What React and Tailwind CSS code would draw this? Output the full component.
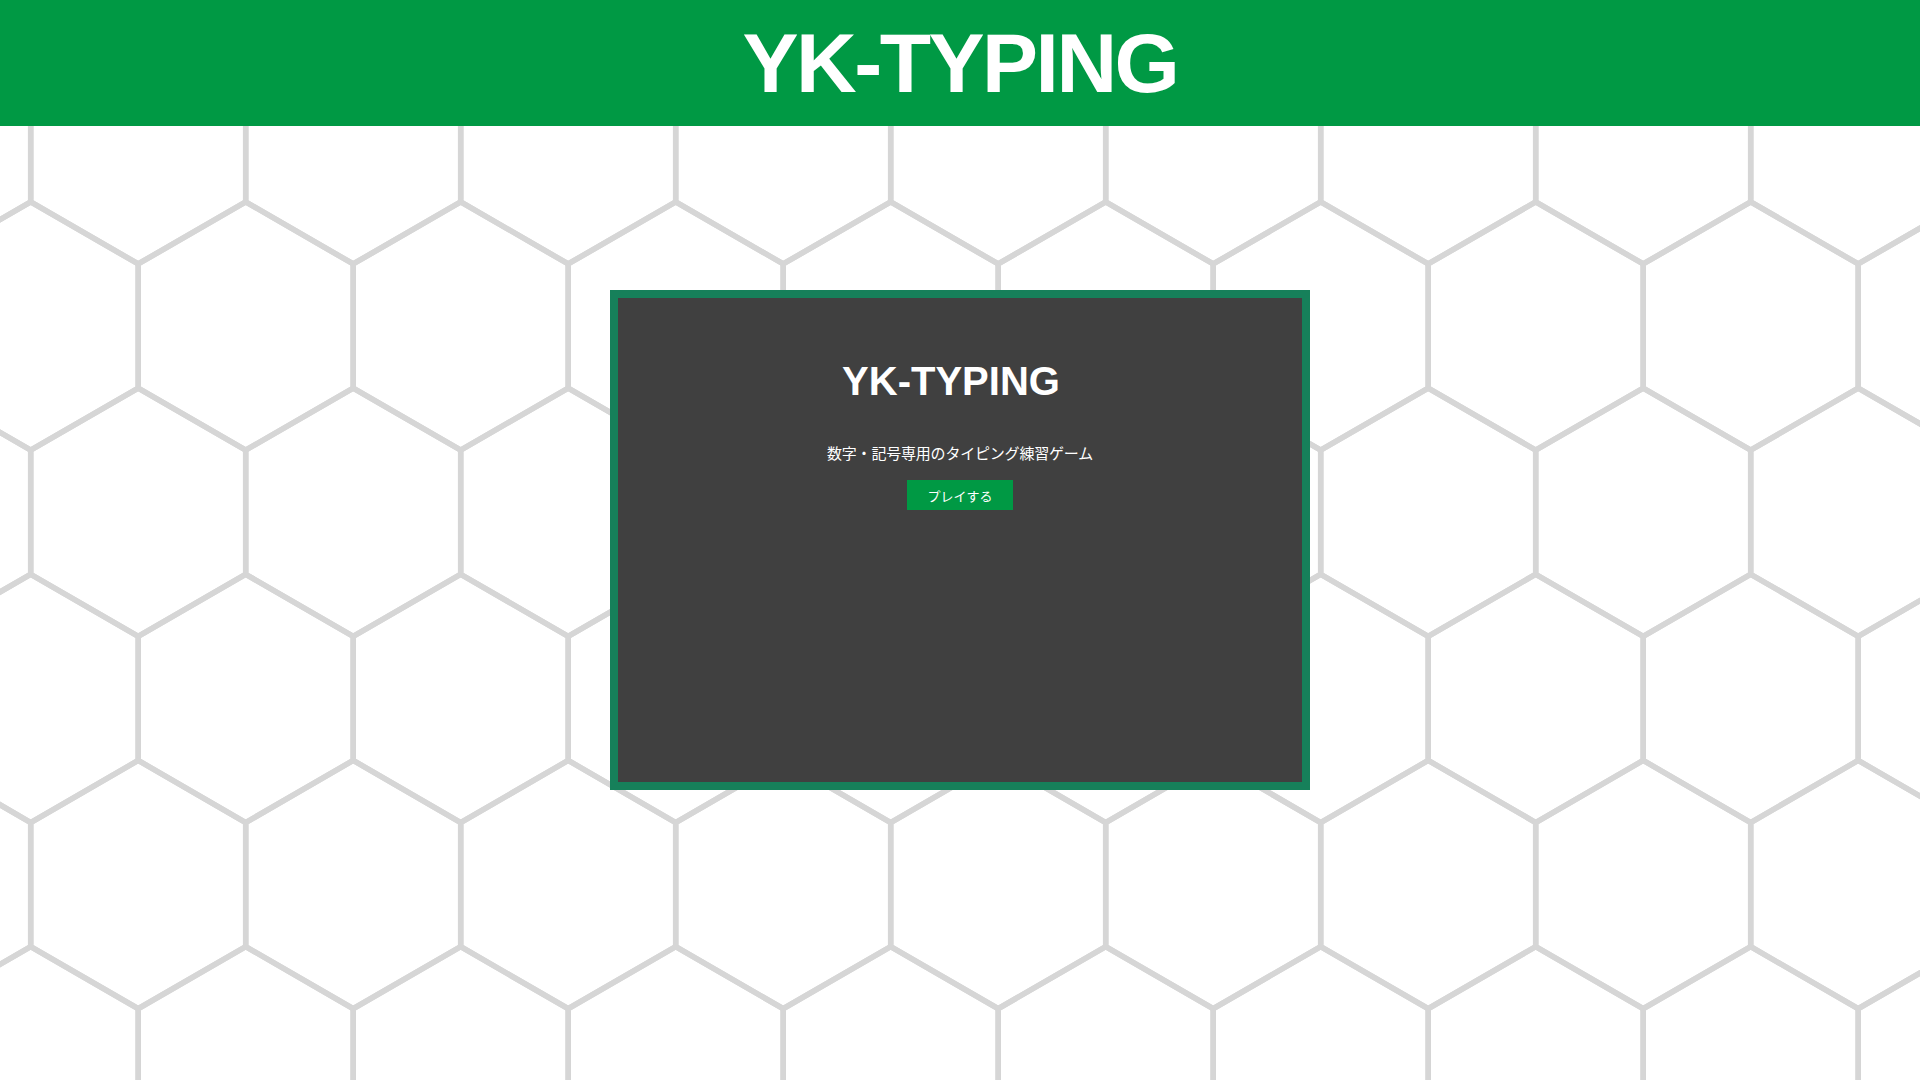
import React from "react";

const S = 124.13; // hexagon side
const W = S * Math.sqrt(3); // 215
const X0 = 245.7;
const Y0 = 326;

function hexPoints(cx, cy) {
  const pts = [
    [cx, cy - S],
    [cx + W / 2, cy - S / 2],
    [cx + W / 2, cy + S / 2],
    [cx, cy + S],
    [cx - W / 2, cy + S / 2],
    [cx - W / 2, cy - S / 2],
  ];
  return pts.map((p) => p[0].toFixed(2) + "," + p[1].toFixed(2)).join(" ");
}

function HexBackground() {
  const hexes = [];
  for (let r = -3; r <= 6; r++) {
    const cy = Y0 + r * 1.5 * S;
    const off = Math.abs(r) % 2 === 1 ? -W / 2 : 0;
    for (let k = -2; k <= 10; k++) {
      const cx = X0 + k * W + off;
      hexes.push(<polygon key={r + "_" + k} points={hexPoints(cx, cy)} />);
    }
  }
  return (
    <svg
      className="absolute inset-0"
      width="1920"
      height="1080"
      viewBox="0 0 1920 1080"
      fill="none"
      stroke="#d6d6d6"
      strokeWidth="5.5"
      strokeLinejoin="miter"
    >
      {hexes}
    </svg>
  );
}

export default function App() {
  return (
    <div className="relative h-screen w-full overflow-hidden bg-white font-['Liberation_Sans','Noto_Sans_CJK_JP',sans-serif]">
      <HexBackground />
      <div className="relative flex flex-col">
        <header className="flex h-[126px] items-center justify-center bg-[#009944]">
          <h1 className="text-[84px] font-bold leading-none tracking-[-2.5px] text-white">
            YK-TYPING
          </h1>
        </header>
        <main className="flex justify-center pt-[164px]">
          <div className="flex h-[500px] w-[700px] flex-col items-center border-8 border-[#16805a] bg-[#404040] pt-[63px]">
            <h2 className="pr-[18px] text-[40px] font-bold leading-none text-white">
              YK-TYPING
            </h2>
            <p className="mt-[44px] font-['Noto_Sans_CJK_JP',sans-serif] text-[15px] leading-none tracking-[-0.2px] text-white">
              数字・記号専用のタイピング練習ゲーム
            </p>
            <button className="mt-[20px] flex h-[30px] items-center bg-[#009944] px-5 font-['Noto_Sans_CJK_JP',sans-serif] text-[13px] leading-none text-white">
              プレイする
            </button>
          </div>
        </main>
      </div>
    </div>
  );
}
